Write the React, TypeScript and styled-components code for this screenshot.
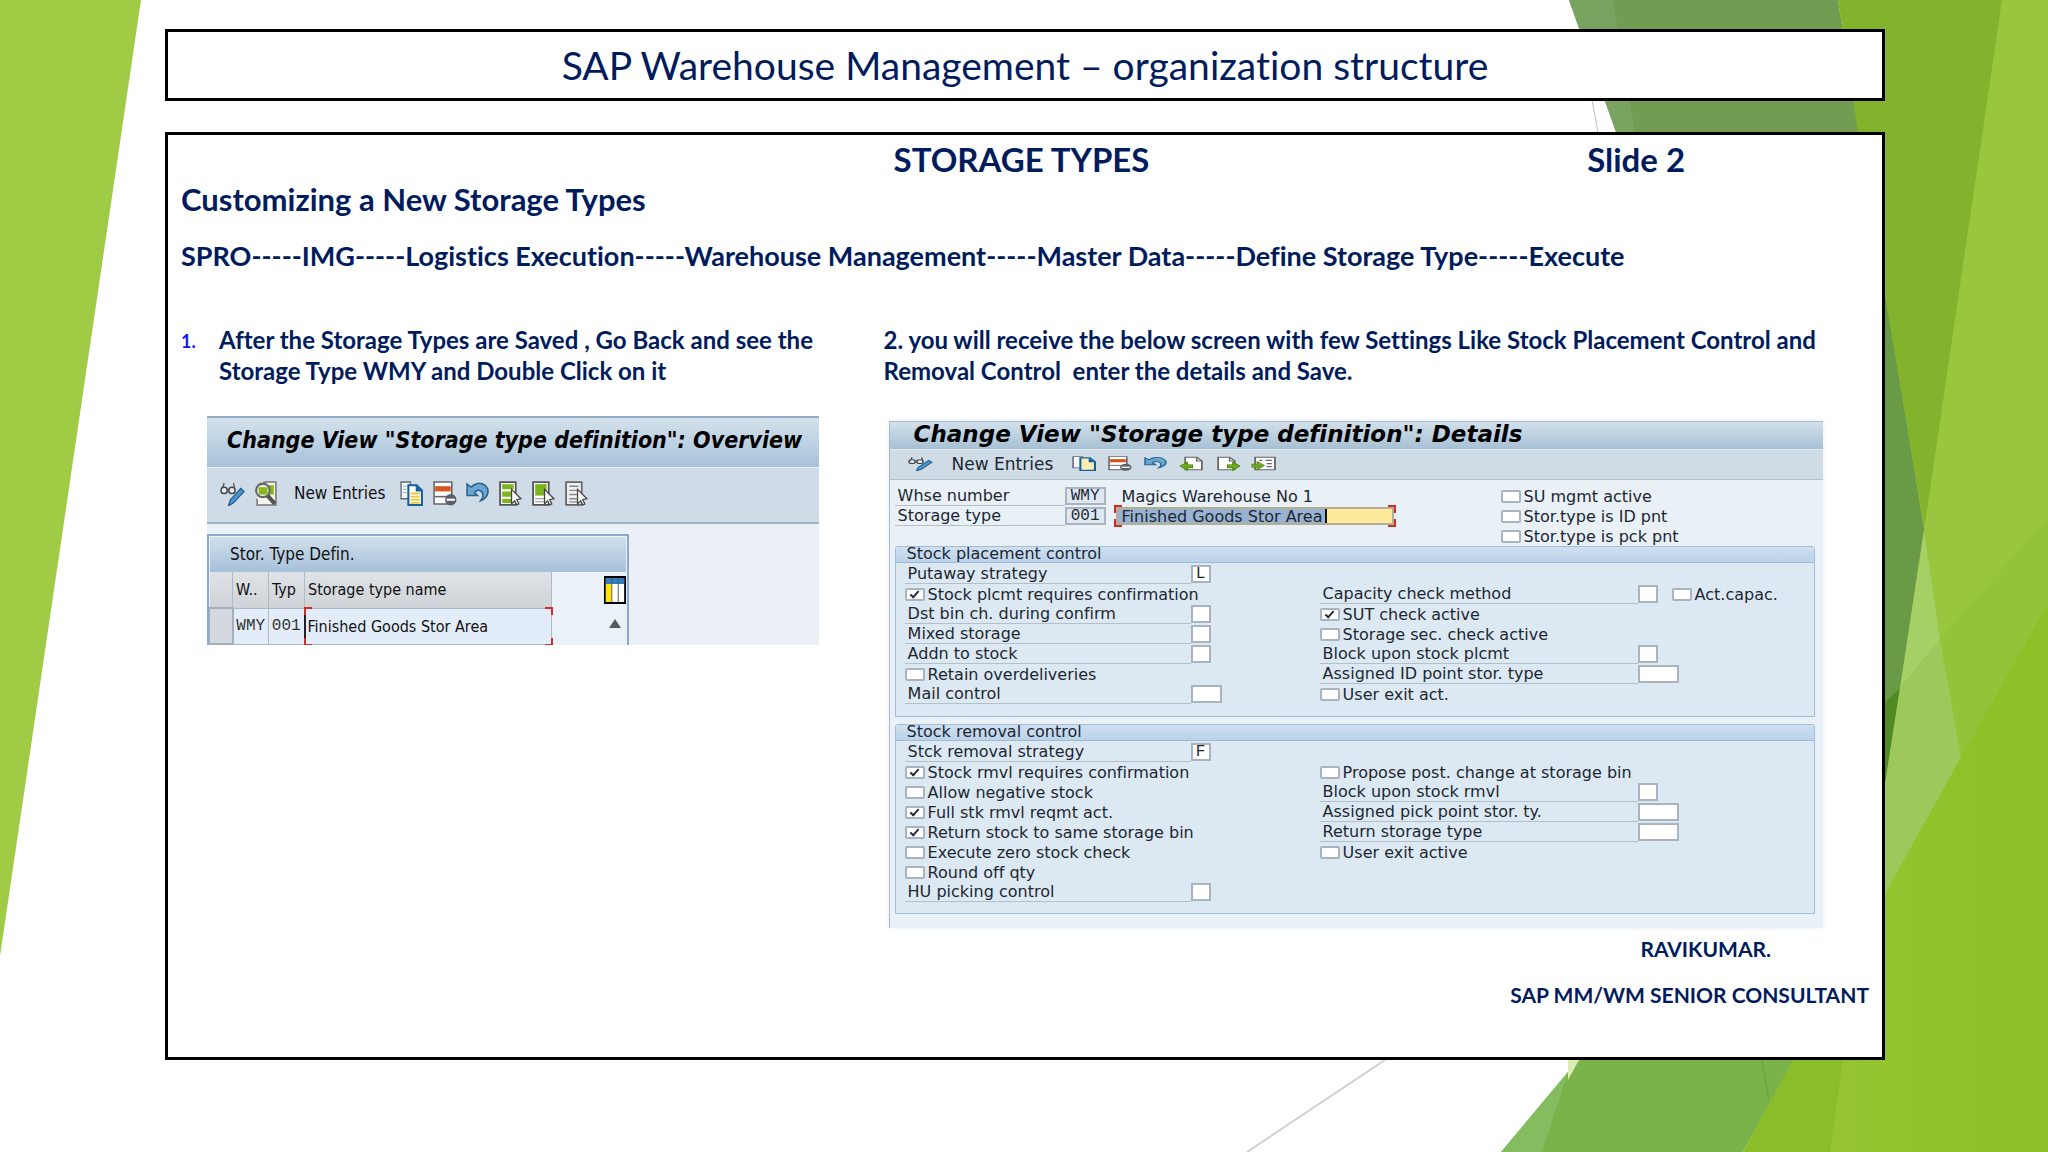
import React from 'react';
import styled, { createGlobalStyle, css } from 'styled-components';

const navy = '#001c5c';
const slideFont = `Lato, "Open Sans", sans-serif`;
const narrowFont = `"DejaVu Sans Condensed", "DejaVu Sans", sans-serif`;
const wideFont = `"DejaVu Sans", sans-serif`;
const monoFont = `"Liberation Mono", monospace`;

const GlobalStyle = createGlobalStyle`
  *, *::before, *::after { box-sizing: border-box; }
  body { margin: 0; background: #fff; }
  h1, h2, h3, p, ol, figure { margin: 0; padding: 0; }
  button, input { font: inherit; color: inherit; margin: 0; padding: 0; border: 0; background: none; }
`;

/* ---------- Slide ---------- */

const Slide = styled.main`
  position: relative;
  isolation: isolate;
  display: flex;
  flex-direction: column;
  gap: 31px;
  min-height: 100vh;
  padding: 29px 163px 92px 165px;
  color: ${navy};
  font-family: ${slideFont};
  font-variant-ligatures: none;
`;

const Backdrop = styled.svg`
  position: absolute;
  inset: 0;
  z-index: -1;
  width: 100%;
  height: 100%;
`;

const TitleBox = styled.header`
  display: flex;
  align-items: center;
  justify-content: center;
  height: 72px;
  border: 3px solid #000;
  background: #fff;
`;

const Title = styled.h1`
  font-size: 39px;
  font-weight: 400;
  line-height: 48px;
`;

const ContentBox = styled.section`
  flex: 1;
  padding: 4px 13px 40px;
  border: 3px solid #000;
  background: #fff;
`;

const HeadingRow = styled.div`
  display: grid;
  grid-template-columns: 713fr 694fr 282fr;
  font-size: 33px;
  font-weight: 700;
  line-height: 40px;
`;

const Heading = styled.h2`
  grid-column: 2;
  font: inherit;
`;

const SubHeading = styled.h3`
  font-size: 31px;
  font-weight: 700;
  line-height: 40px;
`;

const MenuPath = styled.p`
  margin-top: 17px;
  font-size: 27px;
  font-weight: 700;
  line-height: 40px;
`;

const Steps = styled.div`
  display: grid;
  grid-template-columns: 703fr 986fr;
  margin-top: 48px;
`;

const StepText = styled.div`
  display: flex;
  font-size: 24px;
  font-weight: 700;
  line-height: 31px;
  white-space: pre-line;
`;

const StepNumber = styled.span`
  width: 38px;
  color: #1414f0;
  font-size: 18px;
  line-height: 34px;
`;

const Signature = styled.footer`
  display: flex;
  flex-direction: column;
  align-items: flex-end;
  gap: 16px;
  margin-top: 6px;
  font-size: 21px;
  font-weight: 700;
  line-height: 30px;
`;

const SignatureName = styled.p`
  margin-right: 98px;
`;

/* ---------- Shared window parts ---------- */

const corners = css`
  &::after {
    content: '';
    position: absolute;
    inset: -2px;
    pointer-events: none;
    --c: linear-gradient(#d42a2a, #d42a2a);
    background:
      var(--c) left top / 8px 2px, var(--c) left top / 2px 8px,
      var(--c) right top / 8px 2px, var(--c) right top / 2px 8px,
      var(--c) left bottom / 8px 2px, var(--c) left bottom / 2px 8px,
      var(--c) right bottom / 8px 2px, var(--c) right bottom / 2px 8px;
    background-repeat: no-repeat;
  }
`;

const ToolButton = styled.button`
  display: flex;
  align-items: center;
  line-height: 20px;
`;

const IconSvg = styled.svg`
  display: block;
`;

/* ---------- Overview window ---------- */

const OverviewWindow = styled.figure`
  width: 612px;
  height: 229px;
  margin: 30px 0 0 26px;
  overflow: hidden;
  border-top: 2px solid #92abc3;
  background: #eaf0f6;
  color: #111;
  font-family: ${narrowFont};
  font-size: 17px;
`;

const OverviewTitle = styled.h3`
  height: 50px;
  padding-left: 20px;
  border-bottom: 1px solid #e6f0f8;
  background: linear-gradient(#d3e1ec, #a8c2d9);
  color: #000;
  font-size: 23px;
  font-style: italic;
  line-height: 44px;
  white-space: nowrap;
`;

const OverviewTools = styled.div`
  display: flex;
  align-items: center;
  gap: 8px;
  height: 56px;
  padding: 0 0 4px 13px;
  border-bottom: 2px solid #a3b6c8;
  background: #cfdce7;
`;

const OverviewLabel = styled(ToolButton)`
  width: 92px;
  margin: 0 5px 0 8px;
  white-space: nowrap;
`;

const TableFrame = styled.div`
  display: grid;
  grid-template-columns: 1fr 25px;
  width: 422px;
  margin-top: 10px;
  border: 2px solid #8ba9cb;
  border-bottom: 0;
  background: #eaf1f8;
`;

const TableCaption = styled.h4`
  grid-column: 1 / -1;
  margin: 1px 1px 0;
  padding-left: 20px;
  background: linear-gradient(#d0dfec, #a6c0da);
  font-weight: 400;
  line-height: 35px;
`;

const TypeTable = styled.table`
  width: 342px;
  border-collapse: collapse;
  table-layout: fixed;
  font-size: 16px;

  th, td {
    height: 36px;
    padding: 0 0 0 3px;
    border-right: 1px solid #b4bac2;
    border-bottom: 1px solid #aeb7c4;
    font-weight: 400;
    text-align: left;
    white-space: nowrap;
  }
  th { background: linear-gradient(#dfe2e6, #cfd3d8); }
  td { background: #e3edf9; }
`;

const Column = styled.col<{ $width: number }>`
  width: ${(p) => p.$width}px;
`;

const RowSelector = styled.td`
  && {
    border: 2px solid #a5b0bf;
    border-left-width: 1px;
    background: #d4d9e0;
  }
`;

const CodeCell = styled.td`
  color: #333;
  font-family: ${monoFont};
  font-size: 16px;
  && { padding: 0; text-align: center; }
`;

const NameCell = styled.td`
  position: relative;
  ${corners}
  && { border-left: 2px solid #222; padding-left: 2px; }
`;

const TableSide = styled.div`
  display: flex;
  flex-direction: column;
  align-items: center;
  gap: 15px;
  padding-top: 4px;
`;

/* ---------- Details window ---------- */

const DetailsWindow = styled.figure`
  margin: 35px 46px 0 5px;
  height: 507px;
  border: solid #a9b9c8;
  border-width: 1px 0 0 1px;
  background: #e9f0f6;
  color: #1c2733;
  font-family: ${wideFont};
  font-size: 16px;
  box-shadow: 0 0 6px #e6edf6;
`;

const DetailsTitle = styled.h3`
  height: 28px;
  padding-left: 24px;
  border-bottom: 1px solid #dfeaf2;
  background: linear-gradient(#d2e1ec, #a7c0d3);
  color: #000;
  font-size: 23px;
  font-style: italic;
  line-height: 25px;
  white-space: nowrap;
`;

const DetailsTools = styled.div`
  display: flex;
  align-items: center;
  gap: 11px;
  height: 30px;
  padding: 0 0 2px 18px;
  border-bottom: 1px solid #b3c1cd;
  background: #cfdce6;
`;

const DetailsLabel = styled(ToolButton)`
  width: 102px;
  margin: 0 6px 0 8px;
  font-size: 17px;
  white-space: nowrap;
`;

const KeyFields = styled.div`
  display: grid;
  grid-template-columns: 606px 1fr;
  padding: 6px 0 0 5px;
`;

const Row = styled.div`
  display: flex;
  align-items: center;
  height: 20px;
  white-space: nowrap;
`;

const FieldLabel = styled.label<{ $width: number }>`
  width: ${(p) => p.$width}px;
  height: 19px;
  padding-left: 3px;
  border-bottom: 1px solid #b3c0ca;
  line-height: 18px;
`;

const TextField = styled.input<{ $width: number; $readOnly?: boolean }>`
  width: ${(p) => p.$width}px;
  height: 18px;
  border: 2px solid #a9b4c0;
  background: ${(p) => (p.$readOnly ? '#dfe8f1' : '#fff')};
  font-family: ${monoFont};
  text-align: center;
`;

const CheckLabel = styled.label`
  display: flex;
  align-items: center;
  gap: 3px;
`;

const Check = styled.input`
  appearance: none;
  position: relative;
  width: 20px;
  height: 13px;
  border: 2px solid #a9b4c0;
  border-radius: 2px;
  background: #fff;

  &:checked::after {
    content: '';
    position: absolute;
    left: 5px;
    top: -1px;
    width: 5px;
    height: 9px;
    border: solid #222c3a;
    border-width: 0 2px 2px 0;
    transform: rotate(42deg);
  }
`;

const WarehouseName = styled.span`
  margin-left: 16px;
`;

const Highlighted = styled.span`
  position: relative;
  margin-left: 10px;
  height: 18px;
  ${corners}
`;

const HighlightedInput = styled.input`
  display: block;
  width: 278px;
  height: 18px;
  padding-left: 4px;
  border: 2px solid #b3ae95;
  background: linear-gradient(to right, #98b3d1 207px, #111 207px, #111 209px, #ffe99b 209px);
`;

const Group = styled.fieldset`
  margin: 0 8px 0 5px;
  padding: 0;
  border: 1px solid #a3bedb;
  border-radius: 3px 3px 0 0;
  background: #dde9f2;

  & + & { margin-top: 7px; }
`;

const GroupTitle = styled.legend`
  float: left;
  width: 100%;
  height: 16px;
  padding: 0 0 0 11px;
  border-bottom: 1px solid #9dbbd9;
  background: linear-gradient(#cfe0f0, #bcd2e9);
  line-height: 14px;
`;

const GroupBody = styled.div<{ $bottom: number }>`
  clear: both;
  display: grid;
  grid-template-columns: 415px 1fr;
  padding: 1px 0 ${(p) => p.$bottom}px 9px;
`;

const GroupColumn = styled.div<{ $skip?: boolean }>`
  padding-top: ${(p) => (p.$skip ? 20 : 0)}px;
`;

const Aside = styled.span`
  margin-left: 14px;
`;

/* ---------- Icons ---------- */

const art: Record<string, React.ReactNode> = {
  edit: (
    <>
      <path d="M2 8L4 2M14 7L13 2" stroke="#555" fill="none" strokeWidth="1.3" />
      <circle cx="4" cy="9" r="3" fill="#e8eef3" stroke="#444" strokeWidth="1.4" />
      <circle cx="11.500" cy="9" r="3" fill="#e8eef3" stroke="#444" strokeWidth="1.4" />
      <path d="M20 7l3 3-10 11-5 3 2-6z" fill="#4f95c9" stroke="#1f5f93" strokeWidth="1.2" />
    </>
  ),
  find: (
    <>
      <path d="M10 1h12v22H4v-6" fill="#f5f5f0" stroke="#777" strokeWidth="1.5" />
      <path d="M14 4h6v9h-6z" fill="#84b81e" />
      <circle cx="9.500" cy="9" r="6.500" fill="#eaf2dc" stroke="#666" strokeWidth="2" />
      <path d="M5 6h9v7H6z" fill="#84b81e" />
      <path d="M14 14l7 8" stroke="#555" strokeWidth="4" />
    </>
  ),
  copy: (
    <>
      <path d="M2 1h9v16H2z" fill="#f4f7fa" stroke="#667" strokeWidth="1.300" />
      <path d="M4 5h3M4 8h3M4 11h3" stroke="#8aa" />
      <path d="M9 4h8l5 5v14H9z" fill="#fff" stroke="#14609a" strokeWidth="2" />
      <path d="M11 12h9M11 15h9M11 18h9M11 21h9" stroke="#f3c637" strokeWidth="1.700" />
      <path d="M16 4v6h6" fill="#14609a" />
    </>
  ),
  copyShort: (
    <>
      <path d="M2 1h9v18H2z" fill="#f4f7fa" stroke="#667" strokeWidth="1.500" />
      <path d="M9 3h9l5 6v14H9z" fill="#fdeeb4" stroke="#14609a" strokeWidth="2" />
      <path d="M17 3v7h6" fill="#14609a" />
    </>
  ),
  remove: (
    <>
      <path d="M2 1h17v21H2z" fill="#fff" stroke="#666" strokeWidth="1.500" />
      <path d="M3 5h15v5H3z" fill="#d9541e" />
      <path d="M3 15h15" stroke="#666" strokeWidth="1.500" />
      <circle cx="18" cy="18" r="5.500" fill="#5c6066" />
      <path d="M14 18h8" stroke="#fff" strokeWidth="2" />
    </>
  ),
  undo: (
    <path
      d="M2 3v11h10l-3-3c4-4 9-2 8 5l-2 3c8-3 9-11 4-15-4-3-10-2-13 2z"
      fill="#6aa6cf"
      stroke="#24648f"
      strokeWidth="1.500"
    />
  ),
  selectAll: (
    <>
      <path d="M2 1h15v22H2z" fill="#fff" stroke="#555" strokeWidth="1.700" />
      <path d="M4 3h11v5H4zM4 10h11v5H4zM4 17h11v4H4z" fill="#7ab51d" />
      <path d="M13 8l9 9-4 1 2 4-2 1-2-4-3 3z" fill="#fff" stroke="#444" strokeWidth="1.200" />
    </>
  ),
  selectBlock: (
    <>
      <path d="M2 1h15v22H2z" fill="#fff" stroke="#555" strokeWidth="1.700" />
      <path d="M4 3h11v11H4z" fill="#7ab51d" />
      <path d="M4 17h9M4 20h9" stroke="#888" />
      <path d="M13 8l9 9-4 1 2 4-2 1-2-4-3 3z" fill="#fff" stroke="#444" strokeWidth="1.200" />
    </>
  ),
  deselect: (
    <>
      <path d="M2 1h15v22H2z" fill="#eef1f4" stroke="#666" strokeWidth="1.700" />
      <path d="M5 5h9M5 9h9M5 13h8M5 17h8M5 20h8" stroke="#888" strokeWidth="1.300" />
      <path d="M13 8l9 9-4 1 2 4-2 1-2-4-3 3z" fill="#fff" stroke="#444" strokeWidth="1.200" />
    </>
  ),
  previous: (
    <>
      <path d="M6 2h11l5 6v14H6z" fill="#fff" stroke="#666" strokeWidth="1.700" />
      <path d="M17 2v6h5" fill="none" stroke="#666" strokeWidth="1.500" />
      <path d="M1 16l7-6v4h5v5H8v4z" fill="#6cab1c" stroke="#4c8312" />
    </>
  ),
  next: (
    <>
      <path d="M3 2h11l5 6v14H3z" fill="#fff" stroke="#666" strokeWidth="1.700" />
      <path d="M14 2v6h5" fill="none" stroke="#666" strokeWidth="1.500" />
      <path d="M24 16l-7-6v4h-5v5h5v4z" fill="#6cab1c" stroke="#4c8312" />
    </>
  ),
  position: (
    <>
      <path d="M4 2h19v20H4z" fill="#fff" stroke="#666" strokeWidth="1.700" />
      <path d="M8 7h3M14 7h6M15 12h5M15 17h5" stroke="#667" strokeWidth="2" />
      <path d="M13 15l-7-6v4H1v5h5v4z" fill="#6cab1c" stroke="#4c8312" />
    </>
  ),
  columns: (
    <>
      <path d="M1 1h22v26H1z" fill="#fff" stroke="#000" strokeWidth="2" />
      <path d="M2 2h20v6H2z" fill="#2f7fc1" />
      <path d="M2 8h6v18H2z" fill="#ffe600" />
      <path d="M8.500 2v24M15.500 2v24" stroke="#555" />
    </>
  ),
};

type IconProps = { name: string; width?: number; height?: number; box?: string };

const Icon = ({ name, width = 25, height = 25, box = '0 0 24 24' }: IconProps) => (
  <IconSvg width={width} height={height} viewBox={box} preserveAspectRatio="none" aria-hidden="true">
    {art[name]}
  </IconSvg>
);

/* ---------- Form rows ---------- */

type Item =
  | { kind: 'field'; label: string; value?: string; size?: number; extra?: string }
  | { kind: 'check'; label: string; on?: boolean };

const CheckBox = ({ label, on }: { label: string; on?: boolean }) => (
  <CheckLabel>
    <Check type="checkbox" defaultChecked={on} />
    {label}
  </CheckLabel>
);

const Rows = ({ items, labelWidth, prefix }: { items: Item[]; labelWidth: number; prefix: string }) => (
  <>
    {items.map((item, i) => (
      <Row key={item.label}>
        {item.kind === 'check' ? (
          <CheckBox label={item.label} on={item.on} />
        ) : (
          <>
            <FieldLabel $width={labelWidth} htmlFor={`${prefix}-${i}`}>
              {item.label}
            </FieldLabel>
            <TextField id={`${prefix}-${i}`} $width={item.size ?? 20} defaultValue={item.value} />
            {item.extra && (
              <Aside>
                <CheckBox label={item.extra} />
              </Aside>
            )}
          </>
        )}
      </Row>
    ))}
  </>
);

const placementLeft: Item[] = [
  { kind: 'field', label: 'Putaway strategy', value: 'L' },
  { kind: 'check', label: 'Stock plcmt requires confirmation', on: true },
  { kind: 'field', label: 'Dst bin ch. during confirm' },
  { kind: 'field', label: 'Mixed storage' },
  { kind: 'field', label: 'Addn to stock' },
  { kind: 'check', label: 'Retain overdeliveries' },
  { kind: 'field', label: 'Mail control', size: 31 },
];

const placementRight: Item[] = [
  { kind: 'field', label: 'Capacity check method', extra: 'Act.capac.' },
  { kind: 'check', label: 'SUT check active', on: true },
  { kind: 'check', label: 'Storage sec. check active' },
  { kind: 'field', label: 'Block upon stock plcmt' },
  { kind: 'field', label: 'Assigned ID point stor. type', size: 41 },
  { kind: 'check', label: 'User exit act.' },
];

const removalLeft: Item[] = [
  { kind: 'field', label: 'Stck removal strategy', value: 'F' },
  { kind: 'check', label: 'Stock rmvl requires confirmation', on: true },
  { kind: 'check', label: 'Allow negative stock' },
  { kind: 'check', label: 'Full stk rmvl reqmt act.', on: true },
  { kind: 'check', label: 'Return stock to same storage bin', on: true },
  { kind: 'check', label: 'Execute zero stock check' },
  { kind: 'check', label: 'Round off qty' },
  { kind: 'field', label: 'HU picking control' },
];

const removalRight: Item[] = [
  { kind: 'check', label: 'Propose post. change at storage bin' },
  { kind: 'field', label: 'Block upon stock rmvl' },
  { kind: 'field', label: 'Assigned pick point stor. ty.', size: 41 },
  { kind: 'field', label: 'Return storage type', size: 41 },
  { kind: 'check', label: 'User exit active' },
];

const Facets = () => (
  <Backdrop viewBox="0 0 2048 1152" preserveAspectRatio="none" aria-hidden="true">
    <defs>
      <linearGradient id="edge" x1="0" x2="1">
        <stop offset="0" stopColor="#95c632" />
        <stop offset="0.7" stopColor="#8dc127" />
        <stop offset="1" stopColor="#8dc127" />
      </linearGradient>
    </defs>
    <path d="M0 0H141L0 956z" fill="#a0cb45" />
    <path d="M1870 0H2048V1152H1830L1870 1000z" fill="#93c338" />
    <path d="M1569 0L1616 132L1870 700L1886 702L1900 688L1924 530L1838 0z" fill="#729c52" />
    <path d="M1569 0h44l22 132h-19z" fill="#79a360" />
    <path d="M1870 300h16l38 230-24 158-30 28z" fill="#6a9a45" />
    <path d="M1838 0H2003L1925 530L1886 302L1858 132z" fill="#82b32d" />
    <path d="M2002 0H2048V518L1940 640L1924 530z" fill="#98c63e" />
    <path d="M2048 518V603L1961 757L1940 640z" fill="#93c338" />
    <path d="M1870 716L1900 688L1886 778L1870 880z" fill="#4f8a22" />
    <path d="M1924 530L1940 640L1900 688z" fill="#a4d066" />
    <path d="M1940 640L1961 757L1870 921V880L1886 778L1900 688z" fill="#9dc85c" />
    <path d="M1578 1050H1800L1743 1152H1501L1578 1060z" fill="#7bb34b" />
    <path d="M1568 1060h11l-11 20z" fill="#dcecb4" />
    <path d="M1578 1060L1501 1152H1542L1568 1072z" fill="#84bc60" />
    <path d="M1870 921L1793 1060L1743 1152H1840L1870 1000z" fill="#8bbd2b" />
    <path d="M2048 603L1870 921L1843 1060L1830 1152H2048z" fill="url(#edge)" />
    <path d="M1762 1060l7 40" stroke="#659f45" />
    <path d="M1385 1060L1247 1152" stroke="#cfcfcf" strokeWidth="2" />
    <path d="M1592 100L1598 132" stroke="#bdbdbd" />
  </Backdrop>
);

export default function App() {
  return (
    <Slide>
      <GlobalStyle />
      <Facets />
      <TitleBox>
        <Title>SAP Warehouse Management – organization structure</Title>
      </TitleBox>
      <ContentBox>
        <HeadingRow>
          <Heading>STORAGE TYPES</Heading>
          <span>Slide 2</span>
        </HeadingRow>
        <SubHeading>Customizing a New Storage Types</SubHeading>
        <MenuPath>
          SPRO-----IMG-----Logistics Execution-----Warehouse Management-----Master Data-----Define Storage
          Type-----Execute
        </MenuPath>
        <Steps>
          <div>
            <StepText>
              <StepNumber>1.</StepNumber>
              <p>{'After the Storage Types are Saved , Go Back and see the\nStorage Type WMY and Double Click on it'}</p>
            </StepText>
            <OverviewWindow>
              <OverviewTitle>Change View "Storage type definition": Overview</OverviewTitle>
              <OverviewTools>
                <ToolButton aria-label="Display or change"><Icon name="edit" /></ToolButton>
                <ToolButton aria-label="Find"><Icon name="find" /></ToolButton>
                <OverviewLabel>New Entries</OverviewLabel>
                <ToolButton aria-label="Copy"><Icon name="copy" /></ToolButton>
                <ToolButton aria-label="Delete"><Icon name="remove" /></ToolButton>
                <ToolButton aria-label="Undo"><Icon name="undo" /></ToolButton>
                <ToolButton aria-label="Select all"><Icon name="selectAll" /></ToolButton>
                <ToolButton aria-label="Select block"><Icon name="selectBlock" /></ToolButton>
                <ToolButton aria-label="Deselect all"><Icon name="deselect" /></ToolButton>
              </OverviewTools>
              <TableFrame>
                <TableCaption>Stor. Type Defin.</TableCaption>
                <TypeTable>
                  <colgroup>
                    <Column $width={23} />
                    <Column $width={36} />
                    <Column $width={36} />
                    <Column $width={247} />
                  </colgroup>
                  <thead>
                    <tr>
                      <th />
                      <th>W..</th>
                      <th>Typ</th>
                      <th>Storage type name</th>
                    </tr>
                  </thead>
                  <tbody>
                    <tr>
                      <RowSelector />
                      <CodeCell>WMY</CodeCell>
                      <CodeCell>001</CodeCell>
                      <NameCell>Finished Goods Stor Area</NameCell>
                    </tr>
                  </tbody>
                </TypeTable>
                <TableSide>
                  <ToolButton aria-label="Configure columns">
                    <Icon name="columns" width={22} height={28} box="0 0 24 28" />
                  </ToolButton>
                  <IconSvg width="12" height="9" viewBox="0 0 12 9" aria-hidden="true">
                    <path d="M6 0l6 9H0z" fill="#555a60" />
                  </IconSvg>
                </TableSide>
              </TableFrame>
            </OverviewWindow>
          </div>
          <div>
            <StepText>
              <p>
                {'2. you will receive the below screen with few Settings Like Stock Placement Control and\nRemoval Control \u00a0enter the details and Save.'}
              </p>
            </StepText>
            <DetailsWindow>
              <DetailsTitle>Change View "Storage type definition": Details</DetailsTitle>
              <DetailsTools>
                <ToolButton aria-label="Display or change"><Icon name="edit" height={15} /></ToolButton>
                <DetailsLabel>New Entries</DetailsLabel>
                <ToolButton aria-label="Copy"><Icon name="copyShort" height={15} /></ToolButton>
                <ToolButton aria-label="Delete"><Icon name="remove" height={15} /></ToolButton>
                <ToolButton aria-label="Undo"><Icon name="undo" height={15} /></ToolButton>
                <ToolButton aria-label="Previous entry"><Icon name="previous" height={15} /></ToolButton>
                <ToolButton aria-label="Next entry"><Icon name="next" height={15} /></ToolButton>
                <ToolButton aria-label="Other entry"><Icon name="position" height={15} /></ToolButton>
              </DetailsTools>
              <KeyFields>
                <div>
                  <Row>
                    <FieldLabel $width={170} htmlFor="whse">Whse number</FieldLabel>
                    <TextField id="whse" $width={41} $readOnly readOnly value="WMY" />
                    <WarehouseName>Magics Warehouse No 1</WarehouseName>
                  </Row>
                  <Row>
                    <FieldLabel $width={170} htmlFor="type">Storage type</FieldLabel>
                    <TextField id="type" $width={41} $readOnly readOnly value="001" />
                    <Highlighted>
                      <HighlightedInput aria-label="Storage type name" defaultValue="Finished Goods Stor Area" />
                    </Highlighted>
                  </Row>
                </div>
                <div>
                  <Row><CheckBox label="SU mgmt active" /></Row>
                  <Row><CheckBox label="Stor.type is ID pnt" /></Row>
                  <Row><CheckBox label="Stor.type is pck pnt" /></Row>
                </div>
              </KeyFields>
              <Group>
                <GroupTitle>Stock placement control</GroupTitle>
                <GroupBody $bottom={12}>
                  <GroupColumn><Rows items={placementLeft} labelWidth={286} prefix="pl" /></GroupColumn>
                  <GroupColumn $skip><Rows items={placementRight} labelWidth={318} prefix="pr" /></GroupColumn>
                </GroupBody>
              </Group>
              <Group>
                <GroupTitle>Stock removal control</GroupTitle>
                <GroupBody $bottom={11}>
                  <GroupColumn><Rows items={removalLeft} labelWidth={286} prefix="rl" /></GroupColumn>
                  <GroupColumn $skip><Rows items={removalRight} labelWidth={318} prefix="rr" /></GroupColumn>
                </GroupBody>
              </Group>
            </DetailsWindow>
          </div>
        </Steps>
        <Signature>
          <SignatureName>RAVIKUMAR.</SignatureName>
          <p>SAP MM/WM SENIOR CONSULTANT</p>
        </Signature>
      </ContentBox>
    </Slide>
  );
}
